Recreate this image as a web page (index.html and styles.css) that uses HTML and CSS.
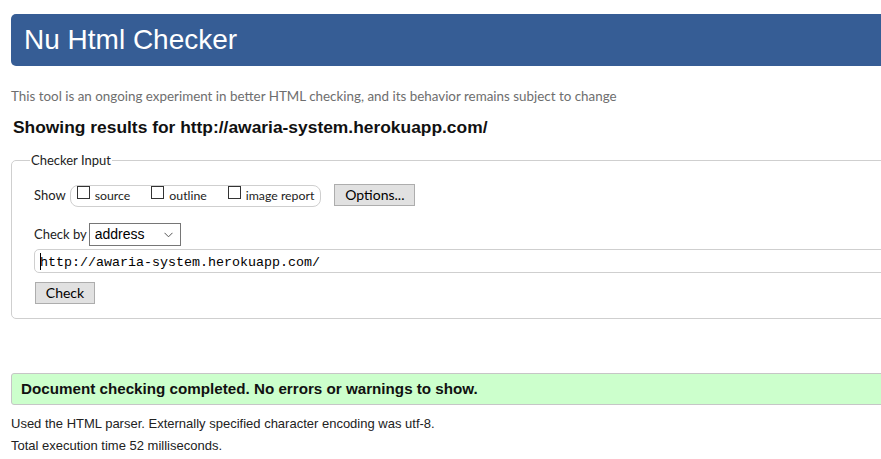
FILE: index.html
```html
<!DOCTYPE html>
<html lang="en">
<head>
<meta charset="utf-8">
<title>Nu Html Checker</title>
<link rel="stylesheet" href="styles.css">
</head>
<body>
<div class="page">
  <h1 class="banner">Nu Html Checker</h1>
  <p class="tagline">This tool is an ongoing experiment in better HTML checking, and its behavior remains subject to change</p>
  <h2 class="results-title">Showing results for http://awaria-system.herokuapp.com/</h2>
  <form class="checker">
    <fieldset class="checker-fieldset">
      <legend class="checker-legend">Checker Input</legend>
      <div class="show-row">
        <span class="show-label">Show</span>
        <span class="pill">
          <label class="opt"><input type="checkbox" class="box">source</label>
          <label class="opt"><input type="checkbox" class="box">outline</label>
          <label class="opt"><input type="checkbox" class="box">image report</label>
        </span>
        <button type="button" class="btn btn-options">Options...</button>
      </div>
      <div class="by-row">
        <span class="by-label">Check by</span>
        <span class="select-wrap">
          <select class="select"><option>address</option></select>
          <svg class="chevron" width="9" height="6" viewBox="0 0 9 6"><path d="M0.5 0.8 L4.5 4.8 L8.5 0.8" fill="none" stroke="#555" stroke-width="1"/></svg>
        </span>
      </div>
      <div class="url-row">
        <input class="url" type="text" value="http://awaria-system.herokuapp.com/">
        <span class="caret"></span>
      </div>
      <div class="submit-row">
        <button type="button" class="btn btn-check">Check</button>
      </div>
    </fieldset>
  </form>
  <p class="success">Document checking completed. No errors or warnings to show.</p>
  <p class="details">Used the HTML parser. Externally specified character encoding was utf-8.</p>
  <p class="details">Total execution time 52 milliseconds.</p>
</div>
</body>
</html>
```

FILE: styles.css
```css
html, body {
  margin: 0;
  padding: 0;
  overflow: hidden;
  background: #fff;
}

body {
  font-family: Lato, "Open Sans", sans-serif;
  color: #222;
}

.page {
  width: 1100px;
  padding: 14px 0 0 11px;
}

.banner {
  margin: 0;
  height: 52px;
  padding-left: 13px;
  background: #365d95;
  border-radius: 5px 0 0 5px;
  color: #fff;
  font-family: "Liberation Sans", Arial, sans-serif;
  font-weight: normal;
  font-size: 28px;
  line-height: 52px;
}

.tagline {
  margin: 22px 0 0 0;
  font-size: 13.4px;
  line-height: 16px;
  color: #6e6e6e;
}

.results-title {
  margin: 13px 0 0 2px;
  font-family: "Liberation Sans", Arial, sans-serif;
  font-size: 17.4px;
  font-weight: bold;
  line-height: 21px;
  color: #111;
}

.checker {
  margin: 14px 0 0 0;
}

.checker-fieldset {
  margin: 0;
  padding: 0 0 14px 22px;
  border: 1px solid #cfcfcf;
  border-radius: 5px;
  min-width: 0;
}

.checker-legend {
  margin-left: -4px;
  padding: 0 1px;
  font-size: 13px;
  line-height: 16px;
  color: #222;
}

.show-row {
  margin-top: 16px;
  display: flex;
  align-items: baseline;
}

.show-label,
.by-label {
  font-size: 13px;
  line-height: 16px;
}

.pill {
  margin-left: 4px;
  display: flex;
  align-items: baseline;
  gap: 21px;
  padding: 0 6px 2px 6px;
  border: 1px solid #cfcfcf;
  border-radius: 8px;
  font-size: 12.3px;
  line-height: 16px;
}

.opt {
  display: inline-block;
}

.box {
  -webkit-appearance: none;
  appearance: none;
  width: 13px;
  height: 13px;
  margin: 0 5px 1px 0;
  border: 1px solid #333;
  background: #fff;
  vertical-align: baseline;
}

.btn {
  font-family: Lato, "Open Sans", sans-serif;
  font-size: 14px;
  line-height: 20px;
  color: #000;
  background: #e1e1e1;
  border: 1px solid #adadad;
  border-radius: 0;
  margin: 0;
}

.btn-options {
  margin-left: 13px;
  padding: 0 9px;
  width: 81px;
}

.by-row {
  margin-top: 16px;
  display: flex;
  align-items: baseline;
}

.select-wrap {
  position: relative;
  margin-left: 2px;
  display: inline-block;
}

.select {
  -webkit-appearance: none;
  appearance: none;
  width: 92px;
  height: 23px;
  margin: 0;
  padding: 0 0 0 5px;
  border: 1px solid #767676;
  border-radius: 0;
  background: #fff;
  font-family: "Liberation Sans", Arial, sans-serif;
  font-size: 14px;
  line-height: 21px;
  color: #000;
}

.chevron {
  position: absolute;
  right: 8px;
  top: 9px;
  pointer-events: none;
}

.url-row {
  position: relative;
  margin-top: 3px;
  display: flex;
}

.url {
  flex: 1;
  margin: 0 22px 0 0;
  height: 24px;
  box-sizing: border-box;
  padding: 2px 5px 0 5px;
  border: 1px solid #cfcfcf;
  border-radius: 5px;
  font-family: "Liberation Mono", "Courier New", monospace;
  font-size: 13.33px;
  line-height: 20px;
  color: #000;
  outline: none;
}

.caret {
  position: absolute;
  left: 6px;
  top: 4px;
  width: 1px;
  height: 17px;
  background: #000;
}

.submit-row {
  margin-top: 9px;
  display: flex;
}

.btn-check {
  margin-left: 1px;
  width: 60px;
  padding: 0;
}

.success {
  margin: 54px 0 0 0;
  padding: 0 0 0 9px;
  background: #ccffcc;
  border: 1px solid #c6c6c6;
  border-radius: 3px;
  font-family: "Liberation Sans", Arial, sans-serif;
  font-size: 15.2px;
  font-weight: bold;
  line-height: 30px;
  color: #111;
}

.details {
  margin: 0;
  font-family: "Liberation Sans", Arial, sans-serif;
  font-size: 13px;
  line-height: 22px;
  color: #222;
}

.success + .details {
  margin-top: 8px;
}
```
